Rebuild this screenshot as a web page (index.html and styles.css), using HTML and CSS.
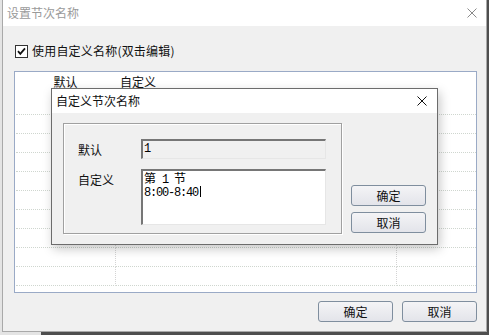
FILE: index.html
```html
<!DOCTYPE html>
<html lang="zh-CN">
<head>
<meta charset="utf-8">
<title>设置节次名称</title>
<link rel="stylesheet" href="styles.css">
</head>
<body>
<div class="screen">
  <div class="window">
    <div class="titlebar">
      <span class="title inactive">设置节次名称</span>
      <span class="close-btn gray"><svg width="10" height="10" viewBox="0 0 10 10"><path d="M0.5 0.5L9.5 9.5M9.5 0.5L0.5 9.5" stroke="#8a8a8a" stroke-width="1" fill="none"/></svg></span>
    </div>
    <div class="win-body">
      <div class="check-row">
        <span class="checkbox"><svg width="11" height="11" viewBox="0 0 11 11"><path d="M2 5.2L4.3 7.8L9 2.4" stroke="#111" stroke-width="1.8" fill="none"/></svg></span>
        <span class="check-label">使用自定义名称(双击编辑)</span>
      </div>
      <div class="list">
        <div class="list-header">
          <div class="hcell h1">默认</div>
          <div class="hcell h2">自定义</div>
          <div class="hcell h3"></div>
        </div>
        <div class="row"><div class="cell"></div><div class="cell"></div><div class="cell last"></div></div>
        <div class="row"><div class="cell"></div><div class="cell"></div><div class="cell last"></div></div>
        <div class="row"><div class="cell"></div><div class="cell"></div><div class="cell last"></div></div>
        <div class="row"><div class="cell"></div><div class="cell"></div><div class="cell last"></div></div>
        <div class="row"><div class="cell"></div><div class="cell"></div><div class="cell last"></div></div>
        <div class="row"><div class="cell"></div><div class="cell"></div><div class="cell last"></div></div>
        <div class="row"><div class="cell"></div><div class="cell"></div><div class="cell last"></div></div>
        <div class="row"><div class="cell"></div><div class="cell"></div><div class="cell last"></div></div>
        <div class="row"><div class="cell"></div><div class="cell"></div><div class="cell last"></div></div>
        <div class="row"><div class="cell"></div><div class="cell"></div><div class="cell last"></div></div>
      </div>
      <div class="actions">
        <button class="btn">确定</button>
        <button class="btn">取消</button>
      </div>
    </div>
  </div>

  <div class="dialog">
    <div class="dlg-titlebar">
      <span class="title">自定义节次名称</span>
      <span class="close-btn"><svg width="10" height="10" viewBox="0 0 10 10"><path d="M0.5 0.5L9.5 9.5M9.5 0.5L0.5 9.5" stroke="#111" stroke-width="1" fill="none"/></svg></span>
    </div>
    <div class="dlg-body">
      <div class="groupbox">
        <div class="field">
          <span class="field-label">默认</span>
          <div class="edit readonly">1</div>
        </div>
        <div class="field">
          <span class="field-label">自定义</span>
          <div class="edit multiline"><span class="cjk">第</span> 1 <span class="cjk">节</span><br>8:00-8:40<span class="caret"></span></div>
        </div>
      </div>
      <div class="dlg-actions">
        <button class="btn">确定</button>
        <button class="btn">取消</button>
      </div>
    </div>
  </div>
</div>
</body>
</html>
```

FILE: styles.css
```css
* { box-sizing: border-box; }

html, body {
  margin: 0;
  padding: 0;
}

body {
  font-family: "Noto Sans CJK SC", "Microsoft YaHei", sans-serif;
  font-size: 12px;
  color: #111;
}

.screen {
  position: relative;
  width: 489px;
  height: 335px;
  overflow: hidden;
  background: linear-gradient(to right, #e4e4e4 0 41px, #4e4e4e 41px);
}

.window {
  margin-left: 2px;
  width: 485px;
  height: 332px;
  background: #f0f0f0;
  border-left: 1px solid #a9a9a9;
  border-right: 1px solid #a9a9a9;
  border-bottom: 1px solid #a9a9a9;
  display: flex;
  flex-direction: column;
}

.titlebar {
  height: 26px;
  background: #fff;
  display: flex;
  align-items: center;
  justify-content: space-between;
  padding: 0 9px 0 4px;
  flex: none;
}

.title {
  line-height: 16px;
}

.title.inactive {
  color: #9a9a9a;
}

.close-btn {
  display: flex;
  width: 10px;
  height: 10px;
}

.win-body {
  flex: 1;
  display: flex;
  flex-direction: column;
  padding: 18px 9px 0 11px;
}

.check-row {
  display: flex;
  align-items: center;
  height: 14px;
  padding-left: 1px;
}

.checkbox {
  width: 13px;
  height: 13px;
  border: 1px solid #333;
  background: #fff;
  display: flex;
  align-items: center;
  justify-content: center;
}

.check-label {
  margin-left: 4px;
  line-height: 16px;
  letter-spacing: 0.2px;
}

.list {
  margin-top: 13px;
  height: 222px;
  border: 1px solid #9aaac6;
  background: #fff;
  display: flex;
  flex-direction: column;
}

.list-header {
  height: 24px;
  display: grid;
  grid-template-columns: 101px 281px 1fr;
  flex: none;
}

.hcell {
  padding-top: 2px;
  line-height: 16px;
}

.h1 { text-align: center; }
.h2 { padding-left: 4px; }

.row {
  height: 19px;
  display: grid;
  grid-template-columns: 101px 281px 1fr;
  flex: none;
}

.cell {
  border-bottom: 1px dotted #cfd6cf;
  border-right: 1px dotted #d4d4d4;
}

.cell.last {
  border-right: none;
}

.row .cell:first-child {
  margin-left: 1px;
}

.actions {
  margin-top: 8px;
  display: flex;
  justify-content: flex-end;
  gap: 9px;
}

.btn {
  width: 75px;
  height: 21px;
  padding: 0;
  border: 1px solid #7f8e9e;
  border-radius: 3px;
  background: linear-gradient(#f4f4f6, #e3e4ea);
  font-family: "Noto Sans CJK SC", "Microsoft YaHei", sans-serif;
  font-size: 12px;
  line-height: 16px;
  color: #111;
}

/* modal dialog over the list */
.dialog {
  position: absolute;
  left: 51px;
  top: 88px;
  width: 387px;
  height: 157px;
  border: 1px solid #6c6c6c;
  background: #f0f0f0;
  box-shadow: 2px 4px 10px rgba(0, 0, 0, 0.22);
  display: flex;
  flex-direction: column;
}

.dlg-titlebar {
  height: 24px;
  flex: none;
  background: #fff;
  display: flex;
  align-items: center;
  justify-content: space-between;
  padding: 0 10px 0 4px;
}

.dlg-body {
  flex: 1;
  display: flex;
  align-items: flex-end;
  padding: 10px 10px 10px 11px;
}

.groupbox {
  width: 279px;
  height: 111px;
  border: 1px solid #a0a0a0;
  box-shadow: inset 1px 1px 0 #fff, 1px 1px 0 #fff;
  padding: 15px 0 0 14px;
  display: flex;
  flex-direction: column;
  gap: 10px;
  align-self: flex-start;
}

.field {
  display: flex;
  align-items: flex-start;
}

.field-label {
  width: 63px;
  margin-top: 3px;
  line-height: 16px;
}

.edit {
  width: 185px;
  border-top: 2px solid #767676;
  border-left: 2px solid #767676;
  border-right: 1px solid #e6e6e6;
  border-bottom: 1px solid #e6e6e6;
  font-family: "Liberation Mono", monospace;
  font-size: 12px;
  letter-spacing: -1.2px;
  color: #000;
  padding-left: 1px;
}

.edit.readonly {
  height: 20px;
  background: #f0f0f0;
  line-height: 17px;
}

.edit.multiline {
  height: 56px;
  background: #fff;
  line-height: 12px;
  padding-top: 1px;
}

.cjk {
  font-family: "Noto Sans CJK SC", sans-serif;
  font-size: 12px;
  line-height: 12px;
  letter-spacing: 0;
}

.caret {
  display: inline-block;
  width: 1px;
  height: 11px;
  background: #000;
  vertical-align: -1px;
  margin-left: 2px;
}

.dlg-actions {
  margin-left: 9px;
  display: flex;
  flex-direction: column;
  gap: 6px;
  padding-bottom: 1px;
}
```
